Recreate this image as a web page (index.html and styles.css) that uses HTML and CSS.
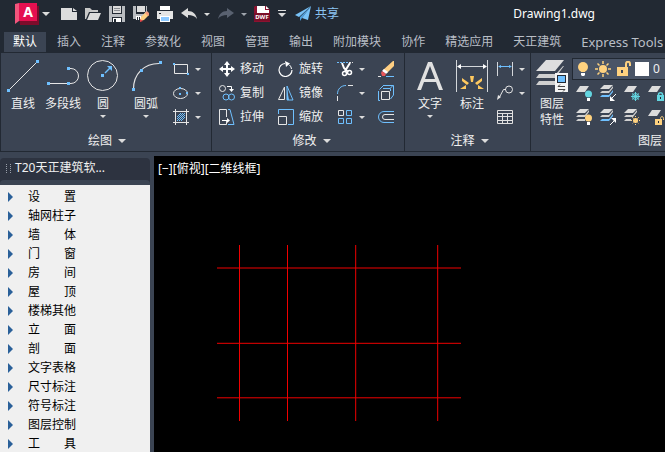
FILE: index.html
```html
<!DOCTYPE html>
<html lang="zh-CN">
<head>
    <meta charset="UTF-8">
    <meta name="viewport" content="width=device-width, initial-scale=1.0">
    <title>Drawing1.dwg</title>
    <link rel="stylesheet" href="styles.css">
</head>
<body>
    <!-- Title bar -->
    <header class="titlebar">
        <button class="app-button" aria-label="应用程序菜单">
            <svg width="24" height="22" viewBox="0 0 24 22">
                <path d="M3 3h21v19H5z" fill="#7d0c2b"/>
                <path d="M0 1l4-1v18l-4 3z" fill="#f2557c"/>
                <path d="M4 0h18v18H4z" fill="#e51050"/>
            </svg>
            <span class="app-letter">A</span>
        </button>
        <button class="arrow-button app-arrow" aria-label="展开"><span class="caret wide"></span></button>
        <div class="quick-access">
            <button aria-label="新建"><svg width="16" height="16"><path d="M0 2h11v4h5v8H0z" fill="#dcdcdc"/><path d="M12 2l4 3h-4z" fill="#dcdcdc"/></svg></button>
            <button aria-label="打开"><svg width="16" height="16"><path d="M0 2h5l2 2h6v2H4L1 13H0z" fill="#c8c8c8"/><path d="M5 7h11l-3 7H2z" fill="#dcdcdc"/></svg></button>
            <button aria-label="保存"><svg width="16" height="16"><path d="M0 0h3v8h10V0h3v16H0z" fill="#b9bcc0"/><path d="M4 0h8v7H4z" fill="#dcdcdc"/><path d="M5 2.500h6M5 4.500h6" stroke="#8a8d92"/><path d="M3 11h10v5H3z" fill="#222933"/><path d="M4 12h8v4H4z" fill="#fff"/><path d="M5 13h2v3H5z" fill="#222933"/></svg></button>
            <button aria-label="另存为"><svg width="16" height="16"><path d="M0 0h3v8h8l2-3V0h1v6l-6 7H0z" fill="#b9bcc0"/><path d="M4 0h8v6H4z" fill="#dcdcdc"/><path d="M3 10h5v4H3z" fill="#fff"/><path d="M4 11h1v3H4zM6 11h1v3H6z" fill="#222933"/><path d="M7 15l1-4 5-5 3 3-5 5z" fill="#ffd080"/><path d="M12 7l2-2 3 3-2 2z" fill="#f49a7a"/><path d="M7 16v-3l3 2z" fill="#e8464a"/></svg></button>
            <button aria-label="打印"><svg width="16" height="16"><path d="M3 0h10v4H3z" fill="#fff"/><path d="M0 5h16v8h-3v-3H3v3H0z" fill="#e4e4e4"/><path d="M2 7.500h2" stroke="#222933"/><path d="M3 10h10v6H3z" fill="#fff"/><path d="M4 11h8v4H4z" fill="#8cc8ff"/></svg></button>
            <button aria-label="放弃"><svg width="16" height="16"><path d="M0 7l7-5v3c5 0 8 3 9 8-2-3-5-4-9-4v3z" fill="#dcdcdc"/></svg></button>
        </div>
        <button class="arrow-button" aria-label="放弃列表"><span class="caret"></span></button>
        <button class="redo" aria-label="重做"><svg width="16" height="16"><path d="M16 7L9 2v3C4 5 1 8 0 13c2-3 5-4 9-4v3z" fill="#596170"/></svg></button>
        <button class="arrow-button" aria-label="重做列表"><span class="caret dim"></span></button>
        <button class="dwf-button" aria-label="输出 DWF">
            <svg width="16" height="16"><path d="M1 0h11l4 4v12H0V1z" fill="#8b1230"/><path d="M3 0h8v4h4v4H3z" fill="#fff"/><path d="M12 0l3 3h-3z" fill="#fff"/><path d="M0 7h16v8H0z" fill="#7b0f29"/></svg>
            <span class="dwf-label">DWF</span>
        </button>
        <button class="customize" aria-label="自定义"><svg width="8" height="8"><path d="M0 .5h8" stroke="#dcdcdc"/><path d="M0 3h8L4 7z" fill="#dcdcdc"/></svg></button>
        <button class="share"><svg width="16" height="16"><path d="M16 0L0 9l4 2z" fill="#78c2f8"/><path d="M16 0L5 11v4l2-3z" fill="#4f9fdd"/><path d="M16 0L7 12l6 2z" fill="#78c2f8"/></svg>共享</button>
        <h1 class="doc-title">Drawing1.dwg</h1>
    </header>

    <nav class="tabs">
        <button class="tab active">默认</button>
        <button class="tab">插入</button>
        <button class="tab">注释</button>
        <button class="tab">参数化</button>
        <button class="tab">视图</button>
        <button class="tab">管理</button>
        <button class="tab">输出</button>
        <button class="tab">附加模块</button>
        <button class="tab">协作</button>
        <button class="tab">精选应用</button>
        <button class="tab">天正建筑</button>
        <button class="tab latin">Express Tools</button>
    </nav>

    <!-- Ribbon -->
    <div class="ribbon">
        <section class="panel draw-panel">
            <div class="panel-body">
                <button class="big-tool">
                    <svg width="32" height="32"><path d="M2 30L30 2" stroke="#e6e6e6"/><path d="M0 29h3v3H0zM29 0h3v3h-3z" fill="#6fc0ff"/></svg>
                    直线
                </button>
                <button class="big-tool">
                    <svg width="32" height="32"><path d="M2 23.500h20M22 8.500h2a7 7 0 0 1 0 15h-2" fill="none" stroke="#e6e6e6"/><path d="M0 22h3v3H0zM20 22h3v3h-3zM20 7h3v3h-3z" fill="#6fc0ff"/></svg>
                    多段线
                </button>
                <button class="big-tool">
                    <svg width="32" height="32"><circle cx="15.500" cy="15.500" r="15" fill="none" stroke="#e6e6e6"/><path d="M14 14h3v3h-3zM20 6h5v5z" fill="#6fc0ff"/><path d="M18 13l5-5" stroke="#6fc0ff" stroke-width="1.500"/></svg>
                    圆
                    <span class="caret"></span>
                </button>
                <button class="big-tool arc-tool">
                    <svg width="32" height="32"><path d="M3.500 29C3.500 14 14 3.500 29 3.500" fill="none" stroke="#e6e6e6" stroke-width="1.200"/><path d="M2 28h3v3H2zM10 9h3v3h-3zM29 1h3v3h-3z" fill="#6fc0ff"/></svg>
                    圆弧
                    <span class="caret"></span>
                </button>
                <div class="tool-column">
                    <button class="small-tool" aria-label="矩形"><svg width="16" height="16"><path d="M1.500 3.500h13v9h-13z" fill="none" stroke="#e6e6e6"/><path d="M0 2h2v2H0zM14 12h2v2h-2z" fill="#6fc0ff"/></svg><span class="caret"></span></button>
                    <button class="small-tool" aria-label="椭圆"><svg width="16" height="16"><ellipse cx="7.500" cy="8.500" rx="7" ry="5" fill="none" stroke="#e6e6e6"/><path d="M6 8h2v2H6zM6 2h2v2H6zM13 7h2v2h-2z" fill="#6fc0ff"/></svg><span class="caret"></span></button>
                    <button class="small-tool" aria-label="图案填充"><svg width="16" height="16"><path d="M4 8l4-4M4 12l8-8M8 12l4-4M4 10l6-6M6 12l6-6" stroke="#6fc0ff"/><path d="M0 2.500h16M0 13.500h16M2.500 0v16M13.500 0v16" stroke="#e6e6e6"/></svg><span class="caret"></span></button>
                </div>
            </div>
            <button class="panel-title">绘图 <span class="caret wide"></span></button>
        </section>

        <section class="panel modify-panel">
            <div class="panel-body">
                <div class="tool-column move-column">
                    <button class="small-tool"><svg width="16" height="16"><path d="M8 2v12M2 8h12" stroke="#fff" stroke-width="2"/><path d="M8 0l3 4H5zM8 16l3-4H5zM0 8l4-3v6zM16 8l-4-3v6z" fill="#fff"/></svg>移动</button>
                    <button class="small-tool"><svg width="16" height="16"><circle cx="3.500" cy="3.500" r="3" fill="none" stroke="#e6e6e6"/><path d="M8 1.500h4.500V5" fill="none" stroke="#fff"/><path d="M10 4h5l-2.500 3z" fill="#fff"/><circle cx="7" cy="12" r="3" fill="none" stroke="#6fc0ff"/><circle cx="12.500" cy="12" r="3" fill="none" stroke="#6fc0ff"/></svg>复制</button>
                    <button class="small-tool"><svg width="16" height="16"><path d="M7.500 8V.5h-7v15h7V12" fill="none" stroke="#e6e6e6"/><path d="M9 .5h2l4 15H9" fill="none" stroke="#6fc0ff"/><path d="M3 11.500h6" stroke="#fff"/><path d="M8 9l3 2.500L8 14z" fill="#fff"/></svg>拉伸</button>
                </div>
                <div class="tool-column rotate-column">
                    <button class="small-tool"><svg width="16" height="16"><path d="M7 2.500a6.500 6.500 0 1 0 7 6.500" fill="none" stroke="#fff" stroke-width="1.200"/><path d="M13.500 8a6 6 0 0 0-2-4" fill="none" stroke="#fff"/><path d="M7 0l5 2.500L8 6z" fill="#fff"/></svg>旋转</button>
                    <button class="small-tool"><svg width="16" height="16"><path d="M6.500 2v12.500h-6z" fill="none" stroke="#e6e6e6"/><path d="M9 1l6 14H9z" fill="none" stroke="#6fc0ff"/><path d="M9 4l2 11H9z" fill="#6fc0ff"/></svg>镜像</button>
                    <button class="small-tool"><svg width="16" height="16"><path d="M.5 5V.5h15v15H10" fill="none" stroke="#6fc0ff"/><path d="M.5 7.500h8v8h-8z" fill="none" stroke="#e6e6e6"/></svg>缩放</button>
                </div>
                <div class="tool-column trim-column">
                    <button class="small-tool" aria-label="修剪"><svg width="16" height="16"><path d="M0 1.500h11" stroke="#6fc0ff" stroke-dasharray="2 1"/><path d="M12 1.500h4" stroke="#dcdcdc" stroke-dasharray="2 1"/><path d="M5 2l2 5 4 4M13 2L8 10" fill="none" stroke="#fff" stroke-width="2"/><circle cx="7.500" cy="12.500" r="2" fill="none" stroke="#fff" stroke-width="1.500"/><circle cx="12.500" cy="11.500" r="2" fill="none" stroke="#fff" stroke-width="1.500"/></svg><span class="caret"></span></button>
                    <button class="small-tool" aria-label="圆角"><svg width="16" height="16"><path d="M.5 16v-5M11 .5h5" stroke="#e6e6e6"/><path d="M.5 9C.5 4 4 .5 9 .5" fill="none" stroke="#6fc0ff"/></svg><span class="caret"></span></button>
                    <button class="small-tool" aria-label="阵列"><svg width="16" height="16"><path d="M1.500 1.500h5v5h-5z" fill="none" stroke="#e6e6e6"/><path d="M9.500 1.500h5v5h-5zM1.500 9.500h5v5h-5zM9.500 9.500h5v5h-5z" fill="none" stroke="#6fc0ff"/></svg><span class="caret"></span></button>
                </div>
                <div class="tool-column">
                    <button class="small-tool" aria-label="删除"><svg width="16" height="16"><path d="M15 0h1v5l-7 7-4-3z" fill="#ffcf82"/><path d="M6 8l4 3-2 2-4-3z" fill="#fff"/><path d="M4 10l4 3-1 2H4l-1-3z" fill="#e8565a"/><path d="M0 15.500h3" stroke="#e6e6e6"/><path d="M8 15.500h8" stroke="#6fc0ff"/></svg></button>
                    <button class="small-tool" aria-label="分解"><svg width="16" height="16"><path d="M.5 6v9.500H2M1.500 4.500l4-4M5 .5h10.500V10M5 3.500h7l3-3M12.500 3.500V6M15.500 10l-3 4" fill="none" stroke="#6fc0ff"/><path d="M3.500 6.500h8v8h-8z" fill="none" stroke="#e6e6e6"/></svg></button>
                    <button class="small-tool" aria-label="偏移"><svg width="16" height="16"><path d="M16 2.500H6a5.500 5.500 0 0 0 0 11h10" fill="none" stroke="#6fc0ff"/><path d="M16 5.500H7a2.500 2.500 0 0 0 0 5h9" fill="none" stroke="#e6e6e6"/></svg></button>
                </div>
            </div>
            <button class="panel-title">修改 <span class="caret wide"></span></button>
        </section>

        <section class="panel note-panel">
            <div class="panel-body">
                <button class="big-tool">
                    <svg width="32" height="32"><path d="M3 30L14 2h4l11 28h-4l-3-8H10l-3 8zM11 19h10L16 6z" fill="#e0e0e0"/></svg>
                    文字
                    <span class="caret"></span>
                </button>
                <button class="big-tool dim-tool">
                    <svg width="32" height="32"><path d="M.5 0v32M31.500 0v32M3 6.500h26" stroke="#d4d7db"/><path d="M1 6.500L5 4v5zM31 6.500L27 4v5z" fill="#fff"/><path d="M14 16h4l-1 6h-2zM6 18l7 5-2 2-5-4zM26 18l-7 5 2 2 5-4zM4 29l6-4v4zM28 29l-6-4v4z" fill="#ffc95f"/></svg>
                    标注
                </button>
                <div class="tool-column">
                    <button class="small-tool" aria-label="线性标注"><svg width="16" height="16"><path d="M.5 1v14M15.500 1v14" stroke="#d4d7db"/><path d="M2 5.500h12" stroke="#6fc0ff"/><path d="M1 5.500L4 4v3zM15 5.500L12 4v3z" fill="#6fc0ff"/></svg><span class="caret"></span></button>
                    <button class="small-tool" aria-label="引线"><svg width="16" height="16"><circle cx="12" cy="4.500" r="3.500" fill="none" stroke="#e6e6e6"/><path d="M9 4.500H6.500L2 13" fill="none" stroke="#e6e6e6"/><path d="M0 15l1-5 3 2z" fill="#e6e6e6"/></svg><span class="caret"></span></button>
                    <button class="small-tool" aria-label="表格"><svg width="16" height="16"><path d="M.5 1.500h15v13H.5zM0 4.500h16M0 7.500h16M0 11.500h16M5.500 4v10M10.500 4v10" fill="none" stroke="#e0e0e0"/></svg></button>
                </div>
            </div>
            <button class="panel-title">注释 <span class="caret wide"></span></button>
        </section>

        <section class="panel layer-panel">
            <div class="panel-body">
                <button class="big-tool layer-tool">
                    <svg width="32" height="32"><path d="M10 0h18l-9 11H0z" fill="#dedede"/><path d="M0 18l3-4h17l7-8h1L19 18z" fill="#d0d0d0"/><path d="M0 25l3-4h17v4z" fill="#d0d0d0"/><path d="M19 13h13v19H19z" fill="#f4f4f4"/><path d="M21 15h9v8h-9z" fill="#222933"/><path d="M22 16h7v6h-7z" fill="#6fc0ff"/><path d="M22 26.500h7M22 29.500h7M24 24.500l-2 2M27 31.500l2-2" stroke="#444"/></svg>
                    <span class="layer-label">图层<br>特性</span>
                </button>
                <div class="layer-tools">
                    <label class="layer-combo">
                        <svg width="16" height="16"><circle cx="8" cy="6" r="5" fill="#ffd27f"/><path d="M5 8h6l-1 3H6z" fill="#ffd27f"/><path d="M6 12h4v2l-1 1H7l-1-1z" fill="#fff"/></svg>
                        <svg width="16" height="16"><circle cx="8" cy="8" r="4" fill="#ffd27f"/><path d="M8 0v3M8 13v3M0 8h3M13 8h3M2.500 2.500l2 2M11.500 11.500l2 2M13.500 2.500l-2 2M4.500 11.500l-2 2" stroke="#ffd27f" stroke-width="1.500"/></svg>
                        <svg width="16" height="16"><path d="M2 6h11v9H2z" fill="#ffd27f"/><path d="M11 7V3c0-3 4-3 4 0v2" fill="none" stroke="#ffd27f" stroke-width="2"/><path d="M6 9h2v3H6z" fill="#3b4453"/></svg>
                        <span class="swatch"></span>
                        <select aria-label="图层"><option>0</option></select>
                    </label>
                    <div class="layer-row">
                        <button aria-label="关"><svg width="16" height="16"><path d="M4 1h9L9 7H0z" fill="#dcdcdc"/><circle cx="12.500" cy="9" r="3.500" fill="#63d5e0"/><path d="M11 13h3v3h-3z" fill="#fff"/></svg></button>
                        <button aria-label="隔离"><svg width="16" height="16"><path d="M4 0h9L9 4H0z" fill="#dcdcdc"/><path d="M0 8l2-2h7l4-5v2L9 8z" fill="#d0d0d0"/><path d="M0 12l2-2h7l4-5v2l-4 5z" fill="#6fc0ff"/><path d="M16 9l-4 4" stroke="#fff"/><path d="M10 16v-5l5 5z" fill="#fff"/></svg></button>
                        <button aria-label="冻结"><svg width="16" height="16"><path d="M4 1h9L9 7H0z" fill="#dcdcdc"/><path d="M11.500 7v9M7 11.500h9M8 8.500l7 6M15 8.500l-7 6" stroke="#63d5e0"/><circle cx="11.500" cy="11.500" r="3" fill="none" stroke="#63d5e0"/></svg></button>
                        <button aria-label="锁定"><svg width="16" height="16"><path d="M4 1h9L9 7H0z" fill="#dcdcdc"/><path d="M9 10h7v6H9z" fill="#63d5e0"/><path d="M10.500 11V9.500c0-2.500 4-2.500 4 0V11" fill="none" stroke="#63d5e0" stroke-width="1.500"/><path d="M12 12h1v2h-1z" fill="#222933"/></svg></button>
                    </div>
                    <div class="layer-row">
                        <button aria-label="打开所有图层"><svg width="16" height="16"><path d="M4 0h9L9 4H0z" fill="#dcdcdc"/><path d="M0 8l2-2h7l4-5v2L9 8z" fill="#d0d0d0"/><path d="M0 12l2-2h7v2z" fill="#d0d0d0"/><circle cx="12.500" cy="9" r="3.500" fill="#ffd27f"/><path d="M11 13h3v3h-3z" fill="#fff"/></svg></button>
                        <button aria-label="取消隔离"><svg width="16" height="16"><path d="M4 0h9L9 4H0z" fill="#dcdcdc"/><path d="M0 8l2-2h7l4-5v2L9 8z" fill="#d0d0d0"/><path d="M0 12l2-2h7l4-5v2l-4 5z" fill="#6fc0ff"/><path d="M10 16l4-4" stroke="#fff"/><path d="M16 9v5l-5-5z" fill="#fff"/></svg></button>
                        <button aria-label="解冻所有图层"><svg width="16" height="16"><path d="M4 0h9L9 4H0z" fill="#dcdcdc"/><path d="M0 8l2-2h7l4-5v2L9 8zM0 12l2-2h5v2z" fill="#d0d0d0"/><circle cx="11.500" cy="11.500" r="2.500" fill="#ffd27f"/><path d="M11.500 7v9M7 11.500h9M8 8l7 7M15 8l-7 7" stroke="#ffd27f" stroke-dasharray="1 1"/></svg></button>
                        <button aria-label="解锁"><svg width="16" height="16"><path d="M4 1h9L9 7H0z" fill="#dcdcdc"/><path d="M7 10h7v6H7z" fill="#ffd27f"/><path d="M12.500 11V9.500c0-2.500 3-2.500 3 0V11" fill="none" stroke="#ffd27f"/><path d="M10 12h1v2h-1z" fill="#222933"/></svg></button>
                    </div>
                </div>
            </div>
            <button class="panel-title">图层 <span class="caret wide"></span></button>
        </section>
    </div>

    <!-- Screen menu and drawing area -->
    <main class="workspace">
        <aside class="screen-menu">
            <div class="menu-head">
                <h2 class="menu-title"><span class="grip"></span>T20天正建筑软...</h2>
                <div class="menu-edge"></div>
            </div>
            <ul class="menu-list">
                <li><button>设　　置</button></li>
                <li><button>轴网柱子</button></li>
                <li><button>墙　　体</button></li>
                <li><button>门　　窗</button></li>
                <li><button>房　　间</button></li>
                <li><button>屋　　顶</button></li>
                <li><button>楼梯其他</button></li>
                <li><button>立　　面</button></li>
                <li><button>剖　　面</button></li>
                <li><button>文字表格</button></li>
                <li><button>尺寸标注</button></li>
                <li><button>符号标注</button></li>
                <li><button>图层控制</button></li>
                <li><button>工　　具</button></li>
            </ul>
        </aside>
        <div class="canvas">
            <div class="view-label">[−][俯视][二维线框]</div>
            <svg class="axis-grid" width="244" height="176">
                <path d="M22.500 0v176M70.500 0v176M138.700 0v176M220.700 0v176" stroke="#f00000"/>
                <path d="M0 23h244M0 98.300h244M0 152.800h244" stroke="#f00000"/>
            </svg>
        </div>
    </main>
</body>
</html>
```

FILE: styles.css
```css
* {
    box-sizing: border-box;
}

body {
    font-family: "Noto Sans", "Noto Sans CJK SC", sans-serif;
    font-size: 12px;
    line-height: 16px;
    margin: 0;
    height: 100vh;
    display: flex;
    flex-direction: column;
    overflow: hidden;
    background-color: #3b4453;
    color: #f0f0f0;
}

button {
    font: inherit;
    color: inherit;
    background: none;
    border: none;
    padding: 0;
    cursor: pointer;
}

svg {
    display: block;
    flex: none;
}

.caret {
    display: block;
    width: 0;
    height: 0;
    border: 3px solid transparent;
    border-top-color: #dcdcdc;
    border-bottom: none;
}

.caret.wide {
    border-width: 4px;
    border-bottom: none;
}

.caret.dim {
    border-top-color: #a0a5ad;
}

/* Title bar */
.titlebar {
    display: flex;
    align-items: center;
    height: 28px;
    padding-left: 15px;
    background-color: #222933;
}

.app-button {
    position: relative;
}

.app-letter {
    position: absolute;
    left: 4px;
    top: 0;
    width: 18px;
    font-size: 14px;
    font-weight: bold;
    line-height: 18px;
    color: #fff;
}

.app-arrow {
    margin-left: 3px;
}

.quick-access {
    display: flex;
    gap: 8px;
    margin: 0 7px 0 11px;
}

.redo {
    margin: 0 7px 0 8px;
}

.dwf-button {
    position: relative;
    margin-left: 7px;
}

.dwf-label {
    position: absolute;
    left: 0;
    top: 7px;
    width: 16px;
    font-size: 6px;
    font-weight: bold;
    line-height: 8px;
    color: #fff;
}

.customize {
    margin: 0 9px 0 8px;
}

.share {
    display: flex;
    gap: 4px;
    color: #8cc4f2;
}

.doc-title {
    flex: 1;
    margin: 0 70px 0 0;
    font-size: 12px;
    font-weight: normal;
    text-align: right;
    color: #fff;
}

/* Ribbon tabs */
.tabs {
    display: flex;
    gap: 2px;
    padding: 4px 0 0 4px;
    overflow: hidden;
    background-color: #222933;
}

.tab {
    flex: none;
    height: 20px;
    padding: 0 9px;
    color: #b9bec6;
}

.tab.active {
    background-color: #3b4453;
    color: #fff;
}

.tab.latin {
    padding-right: 0;
    font-size: 13px;
}

/* Ribbon panels */
.ribbon {
    display: flex;
    height: 100px;
    overflow: hidden;
    border: 1px solid #222933;
    border-right: none;
}

.panel {
    display: flex;
    flex: none;
    flex-direction: column;
    justify-content: space-between;
    padding: 4px 0 2px;
    border-right: 1px solid #222933;
}

.draw-panel {
    width: 211px;
    padding-left: 2px;
}

.modify-panel {
    width: 193px;
    padding-left: 7px;
}

.note-panel {
    width: 126px;
    padding-left: 4px;
}

.layer-panel {
    width: 252px;
    padding-left: 1px;
}

.panel-body {
    display: flex;
}

.panel-title {
    display: flex;
    align-items: center;
    justify-content: center;
    gap: 6px;
    height: 16px;
}

.big-tool {
    display: flex;
    flex-direction: column;
    align-items: center;
    width: 40px;
    padding-top: 3px;
    gap: 4px;
}

.big-tool .caret {
    margin-top: -1px;
}

.arc-tool {
    width: 46px;
}

.note-panel .big-tool {
    width: 42px;
}

.tool-column {
    display: flex;
    flex-direction: column;
    padding-left: 4px;
}

.modify-panel .tool-column {
    padding-left: 0;
}

.small-tool {
    display: flex;
    align-items: center;
    gap: 6px;
    height: 24px;
}

.move-column,
.rotate-column {
    width: 59px;
}

.trim-column {
    width: 41px;
}

.move-column .small-tool,
.rotate-column .small-tool {
    gap: 5px;
}

.layer-tools {
    display: flex;
    flex: 1;
    flex-direction: column;
}

.layer-combo {
    display: flex;
    align-items: center;
    gap: 4px;
    height: 22px;
    margin: 1px 0;
    padding-left: 2px;
    background-color: #4a5567;
    border: 1px solid #222933;
}

.swatch {
    width: 14px;
    height: 14px;
    background-color: #fff;
}

.layer-combo select {
    flex: 1;
    padding: 0;
    font: inherit;
    color: #f0f0f0;
    background: none;
    border: none;
    appearance: none;
}

.layer-row {
    display: flex;
    align-items: center;
    gap: 8px;
    height: 24px;
    padding-left: 4px;
}

/* Workspace */
.workspace {
    display: flex;
    flex: 1;
    gap: 4px;
    min-height: 0;
    padding-top: 4px;
}

.screen-menu {
    display: flex;
    flex: none;
    flex-direction: column;
    width: 150px;
    padding-top: 2px;
}

.menu-head {
    flex: none;
    background-color: #2d3340;
    border-radius: 4px 4px 0 0;
}

.menu-title {
    display: flex;
    align-items: center;
    gap: 4px;
    height: 22px;
    margin: 0;
    padding: 0 0 2px 6px;
    font-size: 12px;
    font-weight: normal;
}

.grip {
    width: 5px;
    height: 9px;
    border: 1px dotted #9aa0aa;
    border-width: 0 1px;
}

.menu-edge {
    height: 5px;
    background-color: #3b4453;
    border-radius: 4px 4px 0 0;
}

.menu-list {
    flex: 1;
    margin: 0;
    padding: 2px 0 0;
    list-style: none;
    overflow: hidden;
    background-color: #f0f0f0;
}

.menu-list button {
    display: flex;
    align-items: center;
    gap: 15px;
    width: 100%;
    height: 19px;
    padding-left: 8px;
    color: #000;
}

.menu-list button::before {
    content: "";
    border: 5px solid transparent;
    border-left-color: #2a6099;
    border-right: none;
}

.canvas {
    flex: 1;
    overflow: hidden;
    padding: 5px 4px;
    background-color: #000;
}

.view-label {
    color: #fff;
}

.axis-grid {
    margin: 68px 0 0 59px;
}
```
